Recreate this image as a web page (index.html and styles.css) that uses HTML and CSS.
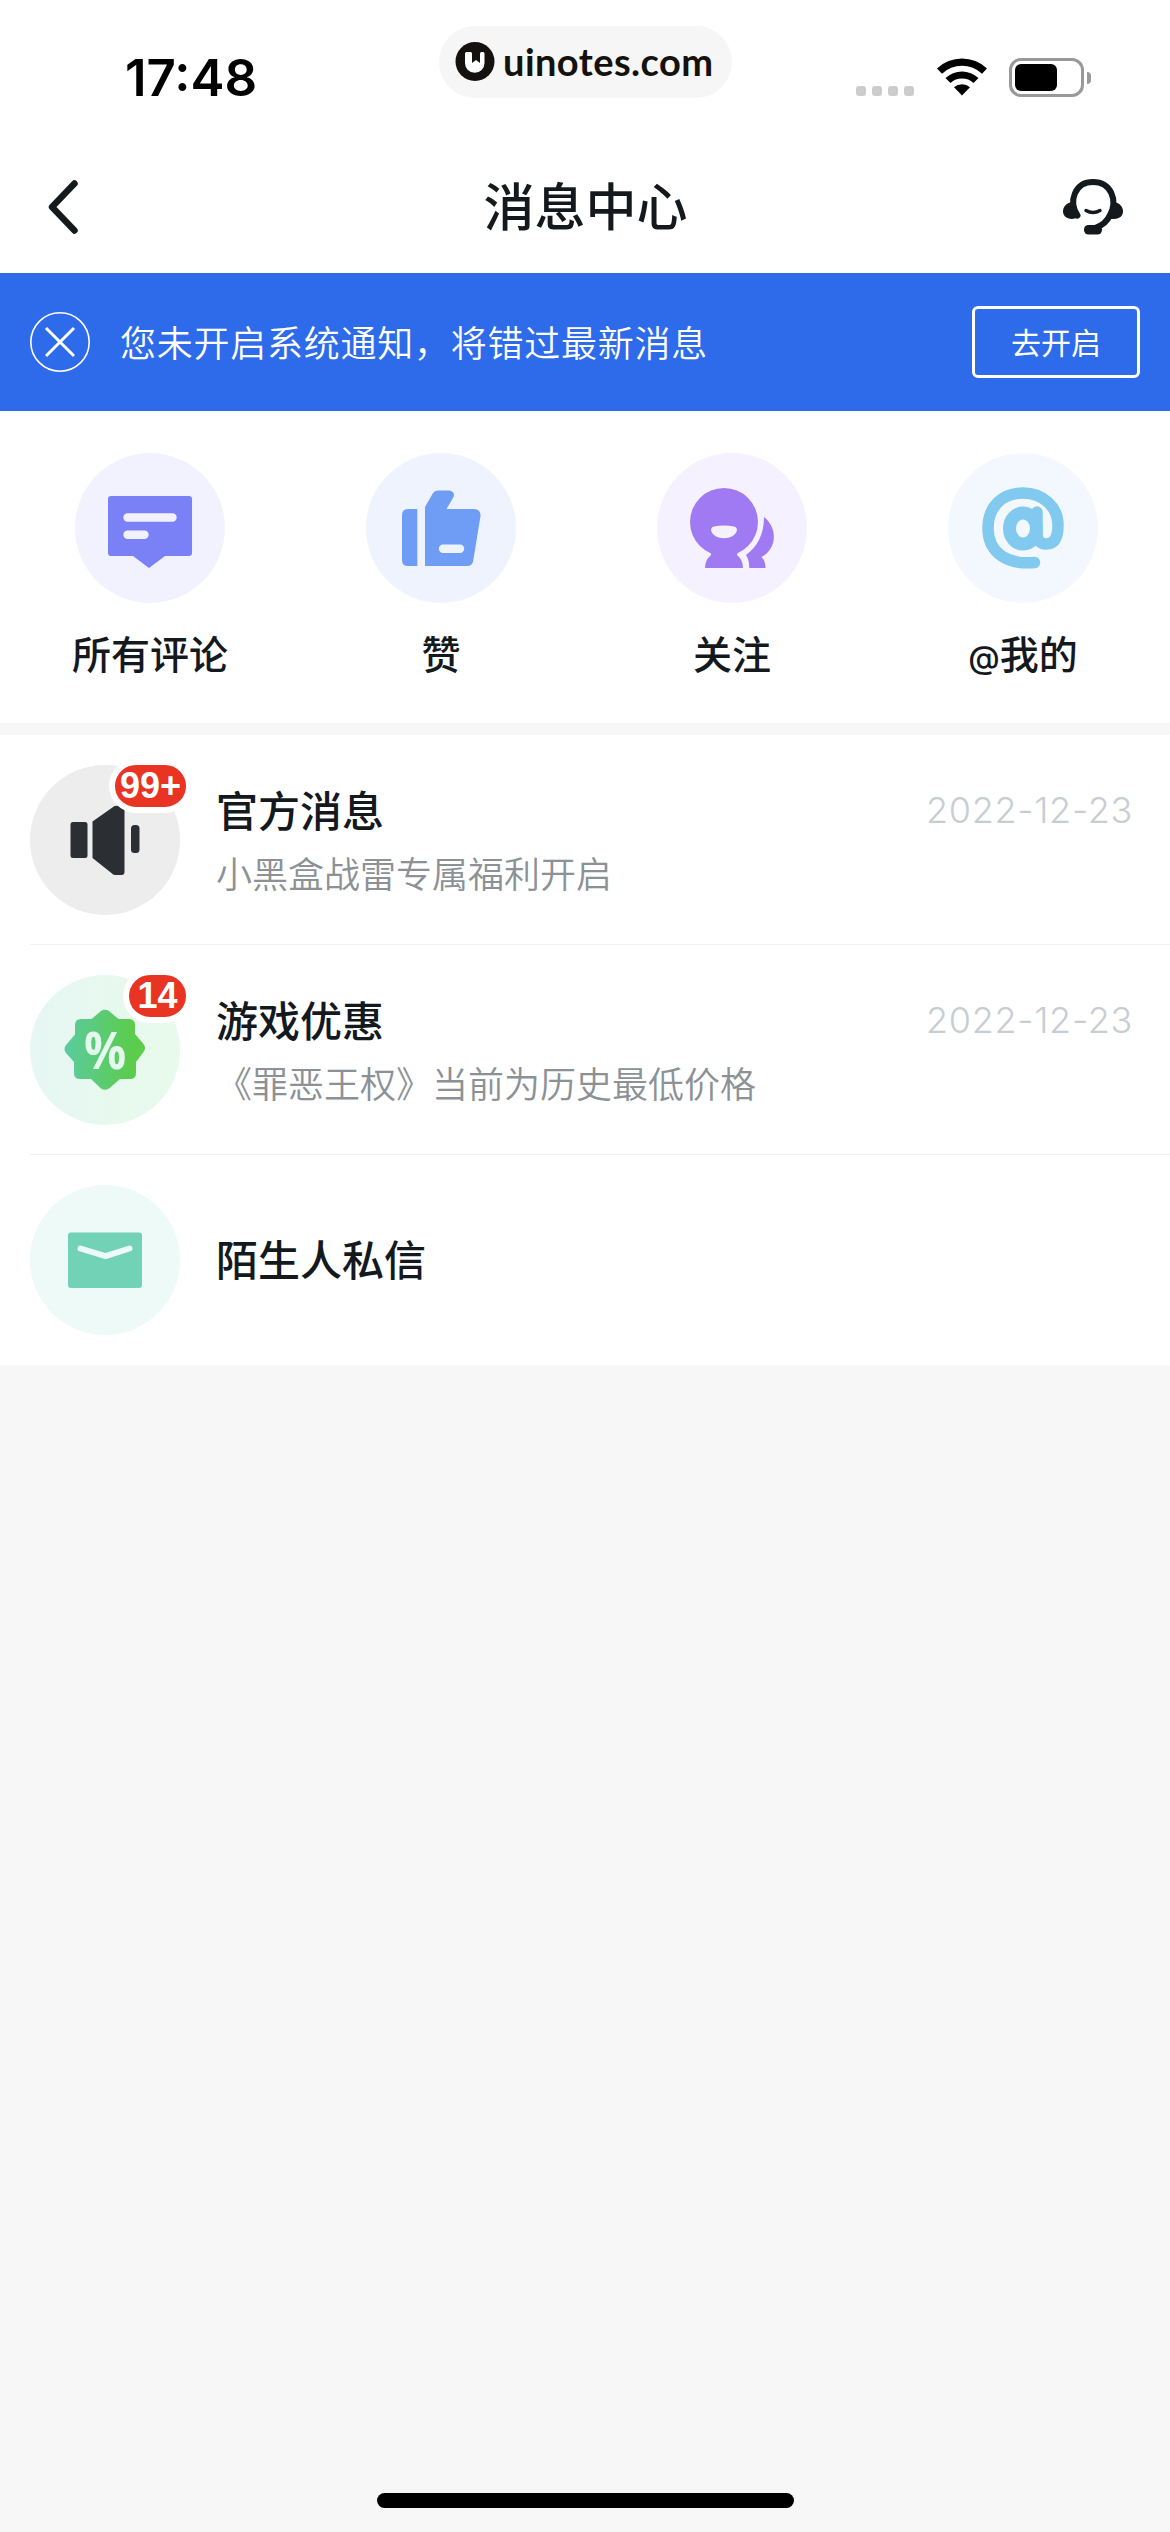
FILE: index.html
```html
<!DOCTYPE html>
<html lang="zh-CN">
<head>
<meta charset="utf-8">
<title>消息中心</title>
<link rel="stylesheet" href="styles.css">
</head>
<body>
<header class="status">
  <span class="status-time">17:48</span>
  <div class="site-pill">
    <svg class="site-logo" viewBox="0 0 39 39"><circle cx="19.5" cy="19.5" r="19.5" fill="#14110f"/><path d="M9.500 11.500q0-1.500 1.500-1.500h4.200q1.300 0 1.300 1.500v9.500l4-3 4 3V11.500q0-1.500 1.500-1.500h1.500q1.500 0 1.500 1.500v9.500a9.700 9.700 0 0 1-19.500 0z" fill="#fff"/></svg>
    <span>uinotes.com</span>
  </div>
  <div class="status-icons">
    <div class="signal"><i></i><i></i><i></i><i></i></div>
    <svg class="wifi" width="50" height="38" viewBox="0 0 50 38"><path d="M0 10.500a36 36 0 0 1 50 0l-5 5.200a29 29 0 0 0-40 0z"/><path d="M8.500 20a24 24 0 0 1 33 0l-5 5a17 17 0 0 0-23 0z"/><path d="M17 29.300a12 12 0 0 1 16 0L25 37.500z"/></svg>
    <div class="battery"><div class="battery-shell"><div class="battery-level"></div></div><div class="battery-cap"></div></div>
  </div>
</header>
<nav class="nav">
  <svg class="back" width="30" height="54" viewBox="0 0 30 54"><path d="M26.500 3.500L4 27l22.500 23.500" fill="none" stroke="#14191e" stroke-width="6.500" stroke-linecap="round" stroke-linejoin="round"/></svg>
  <h1 class="nav-title">消息中心</h1>
  <svg class="service" width="60" height="56" viewBox="0 0 60 56"><g fill="none" stroke="#14191e" stroke-linecap="round"><path d="M14.500 36.500C5 22 12 3 30 3s25 18 17 33c-3 7-9 11-15 13" stroke-width="6"/><path d="M23 31.500q7 4 14 0" stroke-width="3.500"/></g><path d="M9 23c-12 2-12 17 0 17l5-1zM51 23c12 2 12 17 0 17h-5z" fill="#14191e"/><rect x="21" y="46" width="18" height="9.500" rx="4.500" fill="#14191e"/></svg>
</nav>
<section class="notice">
  <svg class="notice-close" width="60" height="60" viewBox="0 0 60 60" fill="none" stroke="#fff"><circle cx="30" cy="30" r="29.200" stroke-width="1.600"/><path d="M16 16l28 28M44 16L16 44" stroke-width="3"/></svg>
  <p class="notice-text">您未开启系统通知，将错过最新消息</p>
  <button class="notice-action">去开启</button>
</section>
<section class="shortcuts">
  <a class="shortcut">
    <svg class="disc" viewBox="0 0 150 150"><circle cx="75" cy="75" r="75" fill="#f2f2fe"/><path d="M36 43h78q3 0 3 3v54q0 3-3 3H90L74 115 58 103H36q-3 0-3-3V46q0-3 3-3z" fill="#7a81f7"/><path d="M52.500 64.500h45M52.500 81.700h17" stroke="#f2f2fe" stroke-width="8.400" stroke-linecap="round"/></svg>
    <span>所有评论</span>
  </a>
  <a class="shortcut">
    <svg class="disc" viewBox="0 0 150 150"><circle cx="75" cy="75" r="75" fill="#eff3fe"/><g fill="#6f9df5"><path d="M42 56h9.300v57H42q-6 0-6-6V62q0-6 6-6z"/><path d="M59 113V54l8-14q1.500-2.500 4.500-2.500H83q6.500 1 4.500 6.500L80.500 56H108q7 .5 6.500 7l-7.300 45q-1 5-6 5z"/></g><path d="M77 95.700h17" stroke="#eff3fe" stroke-width="8.400" stroke-linecap="round"/></svg>
    <span>赞</span>
  </a>
  <a class="shortcut">
    <svg class="disc" viewBox="0 0 150 150"><circle cx="75" cy="75" r="75" fill="#f5f1fe"/><g fill="#a07af3"><circle cx="67" cy="69" r="34"/><path d="M54 98h27l-1 4q6 5 6 13H48q0-8 6-13zM107 64c14 11 13 32-2.500 40q4 4 4 11H92.300q0-8-3.300-13c11-8 18-20 18-38z"/></g><path d="M54 77q0-3 3-3.500 10-2 20 0 3 .5 3 3.500c-2 11-24 11-26 0z" fill="#f5f1fe"/></svg>
    <span>关注</span>
  </a>
  <a class="shortcut">
    <svg class="disc" viewBox="0 0 150 150"><circle cx="75" cy="75" r="75" fill="#f2f8fe"/><g fill="none" stroke="#82c9ef" stroke-linecap="round"><path d="M86.500 109.500C61 112 40 101 40 75c0-22 15-35 35-35s35 14 35 32c0 13-4 19-12 19-6 0-9-4-9-10V59" stroke-width="11.500"/><ellipse cx="75" cy="75.500" rx="13.500" ry="15.500" stroke-width="13"/></g></svg>
    <span><span class="at">@</span>我的</span>
  </a>
</section>
<main class="messages">
  <article class="message">
    <div class="avatar">
      <svg class="disc" viewBox="0 0 150 150"><circle cx="75" cy="75" r="75" fill="#ededed"/><g fill="#2b2f33"><rect x="40.500" y="57" width="17" height="36" rx="2.500"/><path d="M62.500 56.500L84.500 41q10-1 10 3v63q0 3-3 3h-6q-2 0-3.500-1.500L62.500 93z"/><rect x="101" y="60" width="8.500" height="28" rx="3.500"/></g></svg>
      <span class="badge">99+</span>
    </div>
    <div class="message-body">
      <div class="message-text"><h2>官方消息</h2><p>小黑盒战雷专属福利开启</p></div>
      <time>2022-12-23</time>
    </div>
  </article>
  <article class="message">
    <div class="avatar">
      <svg class="disc" viewBox="0 0 150 150"><defs><linearGradient id="pale"><stop stop-color="#e6f7f4"/><stop offset="1" stop-color="#e8faea"/></linearGradient><linearGradient id="leaf"><stop stop-color="#5bcb9f"/><stop offset=".85" stop-color="#5bcc4c"/></linearGradient></defs><circle cx="75" cy="75" r="75" fill="url(#pale)"/><path d="M71 36q4-2.500 8 0l9.500 8H99q6 0 6 6v9l8.500 10q3 4 0 8L106 87v11q0 6-6 6H90l-11 9.500q-4 2.500-8 0L61 104H50q-6 0-6-6V87l-8-9q-3-4 0-8l9-10.500V50q0-6 6-6h10.500z" fill="url(#leaf)"/></svg>
      <span class="percent">%</span>
      <span class="badge">14</span>
    </div>
    <div class="message-body">
      <div class="message-text"><h2>游戏优惠</h2><p>《罪恶王权》当前为历史最低价格</p></div>
      <time>2022-12-23</time>
    </div>
  </article>
  <article class="message">
    <div class="avatar">
      <svg class="disc" viewBox="0 0 150 150"><circle cx="75" cy="75" r="75" fill="#edfaf7"/><rect x="38" y="47.500" width="74" height="55.500" rx="3" fill="#71d2b5"/><path d="M50.500 63.500L75.500 71l24-7.500" fill="none" stroke="#edfaf7" stroke-width="6" stroke-linecap="round"/></svg>
    </div>
    <div class="message-body message-single"><h2>陌生人私信</h2></div>
  </article>
</main>
<footer class="home"><div class="home-bar"></div></footer>
</body>
</html>
```
FILE: styles.css
```css
* { box-sizing: border-box; margin: 0; padding: 0; }
body {
  width: 1170px;
  height: 2532px;
  display: flex;
  flex-direction: column;
  background: #f7f7f7;
  color: #14191e;
  font-family: "Inter", "Noto Sans CJK SC", sans-serif;
  overflow: hidden;
}
svg { display: block; flex: none; }
h1, h2 { font-weight: 500; }

.status {
  height: 140px;
  display: grid;
  grid-template-columns: 439px 293px 1fr;
  align-items: start;
  background: #fff;
}
.status-time {
  padding: 48px 0 0 125px;
  color: #000;
  font-size: 51px;
  line-height: 60px;
  font-weight: 600;
}
.site-pill {
  height: 72px;
  margin-top: 26px;
  padding: 0 0 2px 16px;
  display: flex;
  align-items: center;
  gap: 8px;
  border-radius: 36px;
  background: #f6f6f6;
  color: #14110f;
  font: 700 38px/44px Lato, sans-serif;
  letter-spacing: .45px;
}
.site-logo { width: 40px; height: 39px; }
.status-icons {
  padding: 58px 0 0 124px;
  display: flex;
  align-items: flex-start;
}
.signal { display: flex; gap: 6px; margin-top: 28px; }
.signal i { width: 10px; height: 10px; border-radius: 3px; background: #ccc; }
.wifi { margin-left: 23px; }
.battery { display: flex; align-items: center; gap: 3px; margin-left: 22px; }
.battery-shell { width: 75px; height: 39px; padding: 3px; border: 3px solid #999; border-radius: 12px; }
.battery-level { width: 42px; height: 27px; border-radius: 6px; background: #000; }
.battery-cap { width: 4px; height: 12px; border-radius: 0 4px 4px 0; background: #999; }

.nav {
  height: 133px;
  padding: 0 47px 0 48px;
  display: grid;
  grid-template-columns: 60px 1fr 60px;
  align-items: center;
  background: #fff;
}
.nav-title { padding-top: 3px; text-align: center; font-size: 51px; line-height: 60px; }

.notice {
  height: 138px;
  padding: 0 30px;
  display: flex;
  align-items: center;
  background: #2d6bea;
  color: #fff;
}
.notice-text { flex: 1; margin-left: 30px; padding-bottom: 2px; font-size: 36px; letter-spacing: .75px; font-weight: 350; }
.notice-action {
  width: 168px;
  height: 72px;
  padding-bottom: 2px;
  border: 3px solid #fff;
  border-radius: 6px;
  background: none;
  color: inherit;
  font: 400 30px "Noto Sans CJK SC", sans-serif;
}

.shortcuts {
  height: 312px;
  padding: 42px 1.5px 0 4.5px;
  display: grid;
  grid-template-columns: repeat(4, 1fr);
  background: #fff;
}
.shortcut {
  display: flex;
  flex-direction: column;
  align-items: center;
  gap: 23px;
  font-size: 39px;
  line-height: 58px;
  font-weight: 500;
}
.at { font-size: 32px; }
.disc { width: 150px; height: 150px; }

.messages { margin-top: 12px; background: #fff; }
.message {
  height: 210px;
  padding-left: 30px;
  display: flex;
  background: linear-gradient(#f0f0f0, #f0f0f0) 30px 209px / 100% 1px no-repeat, #fff;
}
.message:last-child { background: #fff; }
.avatar { position: relative; width: 150px; padding-top: 30px; flex: none; }
.badge {
  position: absolute;
  top: 24px;
  right: -12px;
  height: 54px;
  padding: 0 5px;
  min-width: 69px;
  border: 6px solid #fff;
  border-radius: 27px;
  background: #e93323;
  color: #fff;
  text-align: center;
  font: 700 36px/42px "Liberation Sans", sans-serif;
}
.percent {
  position: absolute;
  left: 0;
  top: 74px;
  width: 150px;
  text-align: center;
  color: #e4f8ee;
  font: 700 52px/60px "Open Sans", sans-serif;
  transform: scaleX(.9);
}
.message-body { flex: 1; padding: 46px 37px 0 36px; display: flex; justify-content: space-between; }
.message-text { display: flex; flex-direction: column; gap: 5px; }
h2 { font-size: 42px; line-height: 62px; }
.message-text p { color: #8c9196; font-size: 36px; line-height: 54px; font-weight: 350; }
time { padding-top: 7px; color: #c8cdd2; font-size: 36px; line-height: 44px; font-weight: 350; letter-spacing: .7px; }
.message-single { padding-top: 2px; align-items: center; }

.home { margin-top: auto; height: 39px; display: flex; justify-content: center; }
.home-bar { width: 417px; height: 15px; border-radius: 8px; background: #000; }
```
